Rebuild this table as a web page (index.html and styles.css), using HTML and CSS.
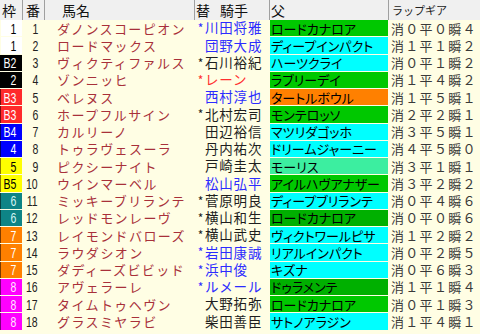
FILE: index.html
```html
<!DOCTYPE html>
<html lang="ja">
<head>
<meta charset="utf-8">
<link rel="stylesheet" href="styles.css">
</head>
<body>
<div class="sheet">
  <div class="row head">
    <div class="c waku">枠</div>
    <div class="c ban">番</div>
    <div class="c name">馬名</div>
    <div class="c jockey"><span>替</span><span class="gap">騎手</span></div>
    <div class="c sire">父</div>
    <div class="c lap">ラップギア</div>
  </div>

  <div class="row"><div class="c waku w1"><span class="num">1</span></div><div class="c ban"><span class="num">1</span></div><div class="c name">ダノンスコーピオン</div><div class="c jockey blue"><span class="ast">*</span>川田将雅</div><div class="c sire g">ロードカナロア</div><div class="c lap">消０平０瞬４</div></div>
  <div class="row"><div class="c waku w1"><span class="num">1</span></div><div class="c ban"><span class="num">2</span></div><div class="c name">ロードマックス</div><div class="c jockey blue"><span class="ast"></span>団野大成</div><div class="c sire cy">ディープインパクト</div><div class="c lap">消１平１瞬２</div></div>
  <div class="row"><div class="c waku w2"><span class="num">B2</span></div><div class="c ban"><span class="num">3</span></div><div class="c name">ヴィクティファルス</div><div class="c jockey"><span class="ast">*</span>石川裕紀</div><div class="c sire cy">ハーツクライ</div><div class="c lap">消０平１瞬２</div></div>
  <div class="row"><div class="c waku w2"><span class="num">2</span></div><div class="c ban"><span class="num">4</span></div><div class="c name">ゾンニッヒ</div><div class="c jockey red"><span class="ast">*</span>レーン</div><div class="c sire g">ラブリーデイ</div><div class="c lap">消１平４瞬２</div></div>
  <div class="row"><div class="c waku w3"><span class="num">B3</span></div><div class="c ban"><span class="num">5</span></div><div class="c name">ベレヌス</div><div class="c jockey blue"><span class="ast"></span>西村淳也</div><div class="c sire or">タートルボウル</div><div class="c lap">消１平５瞬１</div></div>
  <div class="row"><div class="c waku w3"><span class="num">B3</span></div><div class="c ban"><span class="num">6</span></div><div class="c name">ホープフルサイン</div><div class="c jockey"><span class="ast">*</span>北村宏司</div><div class="c sire g">モンテロッソ</div><div class="c lap">消２平２瞬１</div></div>
  <div class="row"><div class="c waku w4"><span class="num">B4</span></div><div class="c ban"><span class="num">7</span></div><div class="c name">カルリーノ</div><div class="c jockey"><span class="ast"></span>田辺裕信</div><div class="c sire cy">マツリダゴッホ</div><div class="c lap">消３平５瞬１</div></div>
  <div class="row"><div class="c waku w4"><span class="num">4</span></div><div class="c ban"><span class="num">8</span></div><div class="c name">トゥラヴェスーラ</div><div class="c jockey"><span class="ast"></span>丹内祐次</div><div class="c sire cy">ドリームジャーニー</div><div class="c lap">消４平５瞬０</div></div>
  <div class="row"><div class="c waku w5"><span class="num">5</span></div><div class="c ban"><span class="num">9</span></div><div class="c name">ピクシーナイト</div><div class="c jockey"><span class="ast"></span>戸崎圭太</div><div class="c sire mt">モーリス</div><div class="c lap">消３平１瞬１</div></div>
  <div class="row"><div class="c waku w5"><span class="num">B5</span></div><div class="c ban"><span class="num">10</span></div><div class="c name">ウインマーベル</div><div class="c jockey blue"><span class="ast"></span>松山弘平</div><div class="c sire g">アイルハヴアナザー</div><div class="c lap">消３平２瞬２</div></div>
  <div class="row"><div class="c waku w6"><span class="num">6</span></div><div class="c ban"><span class="num">11</span></div><div class="c name">ミッキーブリランテ</div><div class="c jockey"><span class="ast">*</span>菅原明良</div><div class="c sire cy">ディープブリランテ</div><div class="c lap">消０平４瞬６</div></div>
  <div class="row"><div class="c waku w6"><span class="num">6</span></div><div class="c ban"><span class="num">12</span></div><div class="c name">レッドモンレーヴ</div><div class="c jockey"><span class="ast">*</span>横山和生</div><div class="c sire g2">ロードカナロア</div><div class="c lap">消０平０瞬６</div></div>
  <div class="row"><div class="c waku w7"><span class="num">7</span></div><div class="c ban"><span class="num">13</span></div><div class="c name">レイモンドバローズ</div><div class="c jockey"><span class="ast">*</span>横山武史</div><div class="c sire cy">ヴィクトワールピサ</div><div class="c lap">消１平２瞬２</div></div>
  <div class="row"><div class="c waku w7"><span class="num">7</span></div><div class="c ban"><span class="num">14</span></div><div class="c name">ラウダシオン</div><div class="c jockey blue"><span class="ast">*</span>岩田康誠</div><div class="c sire cy">リアルインパクト</div><div class="c lap">消０平２瞬５</div></div>
  <div class="row"><div class="c waku w7"><span class="num">7</span></div><div class="c ban"><span class="num">15</span></div><div class="c name">ダディーズビビッド</div><div class="c jockey blue"><span class="ast">*</span>浜中俊</div><div class="c sire cy">キズナ</div><div class="c lap">消０平６瞬３</div></div>
  <div class="row"><div class="c waku w8"><span class="num">8</span></div><div class="c ban"><span class="num">16</span></div><div class="c name">アヴェラーレ</div><div class="c jockey blue"><span class="ast">*</span>ルメール</div><div class="c sire g2">ドゥラメンテ</div><div class="c lap">消１平１瞬４</div></div>
  <div class="row"><div class="c waku w8"><span class="num">8</span></div><div class="c ban"><span class="num">17</span></div><div class="c name">タイムトゥヘヴン</div><div class="c jockey"><span class="ast"></span>大野拓弥</div><div class="c sire g">ロードカナロア</div><div class="c lap">消０平１瞬３</div></div>
  <div class="row"><div class="c waku w8"><span class="num">8</span></div><div class="c ban"><span class="num">18</span></div><div class="c name">グラスミヤラビ</div><div class="c jockey"><span class="ast"></span>柴田善臣</div><div class="c sire cy">サトノアラジン</div><div class="c lap">消１平４瞬１</div></div>
</div>
</body>
</html>
```

FILE: styles.css
```css
* { box-sizing: border-box; margin: 0; padding: 0; }
html, body { width: 480px; height: 334px; overflow: hidden; }
body {
  background: #fffee4;
  font-family: "Noto Sans CJK JP", "Noto Sans", sans-serif;
  color: #111;
}
.sheet { display: flex; flex-direction: column; }
.row {
  display: grid;
  grid-template-columns: 23px 22px 150px 75px 119px 91px;
  height: 17.25px;
  padding-bottom: 1px;
}
.c {
  display: flex;
  align-items: center;
  white-space: nowrap;
  line-height: 1;
  min-width: 0;
}

/* header */
.head { height: 20px; padding: 0; background: #f0f0f0; }
.head .c {
  border-right: 1px solid #a0a0a0;
  font-size: 14px;
  color: #111;
  justify-content: flex-start;
  padding: 0;
  margin: 0;
  letter-spacing: 0;
  background: #f0f0f0;
}
.head .waku { padding-left: 2px; }
.head .ban { padding-left: 3px; }
.head .name { padding-left: 17px; }
.head .jockey { padding-left: 1px; }
.head .gap { margin-left: 10px; }
.head .sire { padding-left: 1px; }
.head .lap { padding-left: 3px; font-size: 11px; border-right: 0; color: #222; }

/* numeric glyphs */
.num {
  display: inline-block;
  font-family: "Liberation Sans", Arial, sans-serif;
  font-size: 15px;
  transform: scaleX(0.7);
  transform-origin: right center;
}

/* waku */
.waku { justify-content: flex-end; padding-right: 6px; margin-right: 1px; }
.w1 { background: #ffffff; color: #000; margin-left: 1px; }
.w2 { background: #000000; color: #fff; }
.w3 { background: #ff2a2a; color: #fff; box-shadow: inset 1px 0 #7a1010; }
.w4 { background: #0000ff; color: #fff; box-shadow: inset 1px 0 #00006a; }
.w5 { background: #ffff00; color: #000; box-shadow: inset 1px 0 #8a7a00; }
.w6 { background: #0e8486; color: #d8f4f4; box-shadow: inset 1px 0 #0a4040; }
.w7 { background: #ff8000; color: #fff; box-shadow: inset 1px 0 #7a3a00; }
.w8 { background: #ff00ff; color: #ffe6ff; box-shadow: inset 1px 0 #7a007a; }

/* number */
.ban { justify-content: flex-end; padding-right: 7px; color: #222; }

/* horse name */
.name {
  padding-left: 12px;
  font-size: 13px;
  letter-spacing: 1.4px;
  color: #a8303a;
}

/* jockey */
.jockey {
  padding-left: 1px;
  font-size: 13.5px;
  letter-spacing: 0.8px;
  color: #1e1e1e;
}
.ast {
  display: inline-block;
  width: 9px;
  font-size: 12px;
  text-align: center;
  letter-spacing: 0;
}
.jockey.blue { color: #2c2cff; }
.jockey.red { color: #ff3030; }

/* sire */
.sire {
  margin-right: 1px;
  padding-left: 1px;
  font-size: 13px;
  font-feature-settings: "palt";
  color: #000;
  overflow: hidden;
}
.g { background: #00c800; }
.g2 { background: #00b000; }
.cy { background: #00ffff; }
.or { background: #ff8000; }
.mt { background: #3ceea0; }

/* lap gear */
.lap {
  padding-left: 2px;
  font-size: 13px;
  letter-spacing: 1.3px;
  color: #3a3a3a;
}
```
